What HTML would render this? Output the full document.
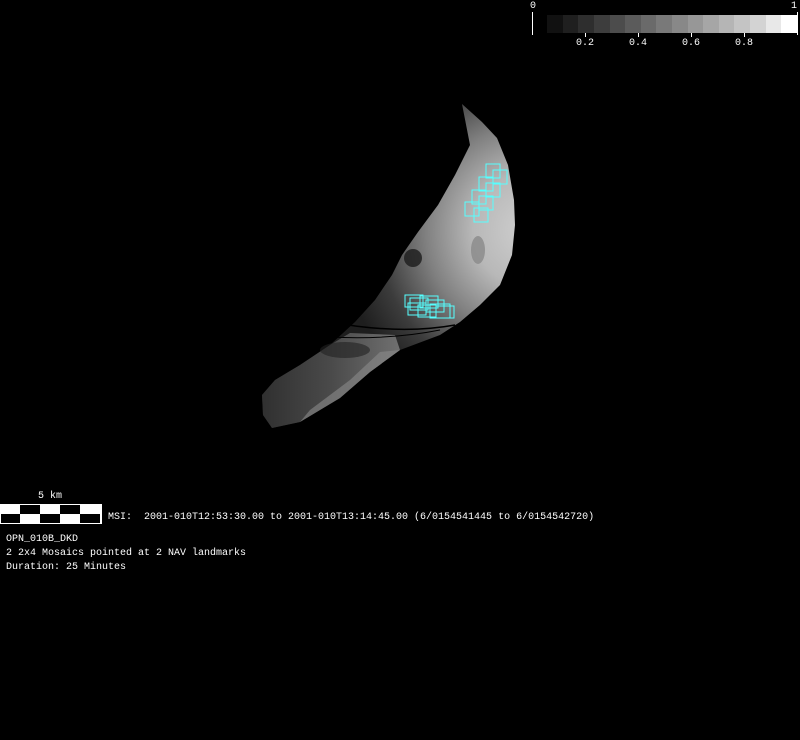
<!DOCTYPE html>
<html><head><style>
html,body{margin:0;padding:0;background:#000;width:800px;height:740px;overflow:hidden}
.t{position:absolute;color:#fff;font-family:"Liberation Mono","DejaVu Sans Mono",monospace;font-size:10px;line-height:14px;white-space:pre}
</style></head><body>
<svg width="800" height="740" style="position:absolute;left:0;top:0" xmlns="http://www.w3.org/2000/svg">
<defs>
<radialGradient id="g" cx="530" cy="230" r="190" gradientUnits="userSpaceOnUse">
<stop offset="0" stop-color="#d0d0d0"/>
<stop offset="0.3" stop-color="#b8b8b8"/>
<stop offset="0.55" stop-color="#808080"/>
<stop offset="0.8" stop-color="#3c3c3c"/>
<stop offset="1" stop-color="#1e1e1e"/>
</radialGradient>
<linearGradient id="lobe" x1="0" y1="0" x2="1" y2="0">
<stop offset="0" stop-color="#303030"/><stop offset="0.5" stop-color="#4a4a4a"/><stop offset="1" stop-color="#707070"/>
</linearGradient>
</defs>
<g>
<rect x="547" y="15" width="16" height="18" fill="#111"/><rect x="563" y="15" width="15" height="18" fill="#1f1f1f"/>
<rect x="578" y="15" width="16" height="18" fill="#2e2e2e"/><rect x="594" y="15" width="16" height="18" fill="#3d3d3d"/>
<rect x="610" y="15" width="15" height="18" fill="#4c4c4c"/><rect x="625" y="15" width="16" height="18" fill="#5b5b5b"/>
<rect x="641" y="15" width="15" height="18" fill="#6a6a6a"/><rect x="656" y="15" width="16" height="18" fill="#797979"/>
<rect x="672" y="15" width="16" height="18" fill="#888"/><rect x="688" y="15" width="15" height="18" fill="#979797"/>
<rect x="703" y="15" width="16" height="18" fill="#a6a6a6"/><rect x="719" y="15" width="15" height="18" fill="#b5b5b5"/>
<rect x="734" y="15" width="16" height="18" fill="#c4c4c4"/><rect x="750" y="15" width="16" height="18" fill="#d3d3d3"/>
<rect x="766" y="15" width="15" height="18" fill="#e8e8e8"/><rect x="781" y="15" width="17" height="18" fill="#fff"/>
<line x1="532.5" y1="12" x2="532.5" y2="35" stroke="#fff"/>
<line x1="797.5" y1="12" x2="797.5" y2="35" stroke="#fff"/>
<line x1="585.5" y1="33" x2="585.5" y2="37" stroke="#fff"/>
<line x1="638.5" y1="33" x2="638.5" y2="37" stroke="#fff"/>
<line x1="691.5" y1="33" x2="691.5" y2="37" stroke="#fff"/>
<line x1="744.5" y1="33" x2="744.5" y2="37" stroke="#fff"/>
</g>
<path d="M462,104 L482,122 L497,138 L508,165 L514,200 L515,225 L512,255 L500,285 L480,305 L460,322 L440,335 L400,350 L370,372 L340,398 L300,422 L272,428 L263,415 L262,395 L275,380 L300,365 L330,345 L355,322 L375,300 L392,275 L402,255 L418,232 L438,205 L455,175 L470,145 Z" fill="url(#g)"/>
<path d="M300,422 L272,428 L263,415 L262,395 L275,380 L300,365 L330,345 L350,333 L395,335 L400,350 L370,372 L340,398 Z" fill="url(#lobe)"/>
<path d="M300,422 L340,398 L370,372 L400,350 L380,352 L350,380 L310,410 Z" fill="#8a8a8a" opacity="0.6"/>
<ellipse cx="413" cy="258" rx="9" ry="9" fill="#1c1c1c" opacity="0.8"/>
<ellipse cx="478" cy="250" rx="7" ry="14" fill="#8a8a8a" opacity="0.8"/>
<ellipse cx="345" cy="350" rx="25" ry="8" fill="#222" opacity="0.6"/>
<path d="M330,322 Q400,335 455,325" stroke="#000" stroke-width="1.5" fill="none"/>
<path d="M330,337 Q390,340 440,330" stroke="#000" stroke-width="1" fill="none"/>
<g fill="none" stroke="#5ff" stroke-width="1">
<rect x="486" y="164" width="14" height="14"/><rect x="493" y="170" width="14" height="14"/>
<rect x="479" y="177" width="14" height="14"/><rect x="486" y="183" width="14" height="14"/>
<rect x="472" y="190" width="14" height="14"/><rect x="479" y="196" width="14" height="14"/>
<rect x="465" y="202" width="14" height="14"/><rect x="474" y="208" width="14" height="14"/>
<rect x="405" y="295" width="18" height="12"/><rect x="410" y="298" width="18" height="12"/>
<rect x="420" y="296" width="18" height="12"/><rect x="426" y="300" width="18" height="12"/>
<rect x="408" y="303" width="18" height="12"/><rect x="418" y="305" width="18" height="12"/>
<rect x="430" y="304" width="20" height="14"/><rect x="436" y="306" width="18" height="12"/>
</g>
<rect x="0.5" y="504.5" width="100" height="19" fill="#fff" stroke="#fff"/>
<rect x="20" y="505" width="20" height="9" fill="#000"/><rect x="60" y="505" width="20" height="9" fill="#000"/>
<rect x="1" y="514" width="19" height="9" fill="#000"/><rect x="40" y="514" width="20" height="9" fill="#000"/><rect x="80" y="514" width="20" height="9" fill="#000"/>
<line x1="101.5" y1="504" x2="101.5" y2="524" stroke="#fff"/>
</svg>
<div class="t" style="left:530px;top:0">0</div>
<div class="t" style="left:791px;top:0">1</div>
<div class="t" style="left:576px;top:37px">0.2</div>
<div class="t" style="left:629px;top:37px">0.4</div>
<div class="t" style="left:682px;top:37px">0.6</div>
<div class="t" style="left:735px;top:37px">0.8</div>
<div class="t" style="left:38px;top:490px">5 km</div>
<div class="t" style="left:108px;top:511px">MSI:  2001-010T12:53:30.00 to 2001-010T13:14:45.00 (6/0154541445 to 6/0154542720)</div>
<div class="t" style="left:6px;top:533px">OPN_010B_DKD
2 2x4 Mosaics pointed at 2 NAV landmarks
Duration: 25 Minutes</div>
</body></html>
